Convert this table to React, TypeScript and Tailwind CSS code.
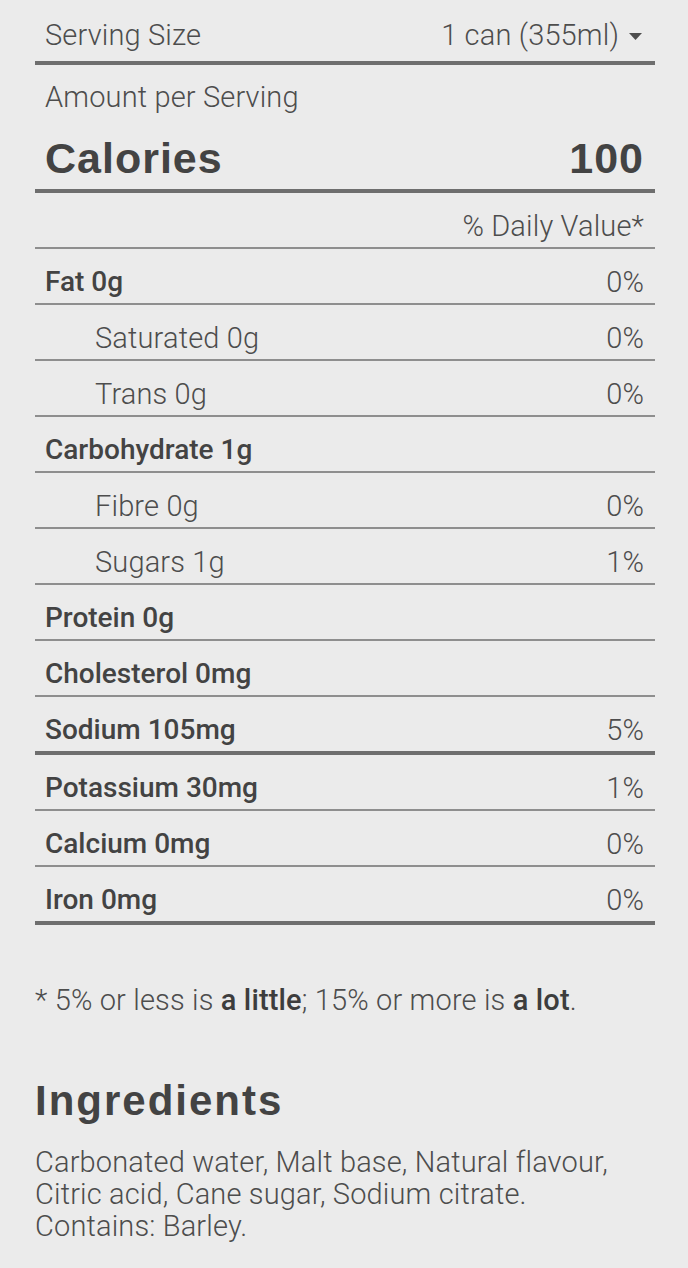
import { FC, ReactNode } from 'react';

type Nutrient = {
  label: string;
  value?: string;
  sub?: boolean;
  thick?: boolean;
  h: string;
};

const nutrients: Nutrient[] = [
  { label: 'Fat 0g', value: '0%', h: 'h-[56px]' },
  { label: 'Saturated 0g', value: '0%', sub: true, h: 'h-[56px]' },
  { label: 'Trans 0g', value: '0%', sub: true, h: 'h-[56px]' },
  { label: 'Carbohydrate 1g', h: 'h-[56px]' },
  { label: 'Fibre 0g', value: '0%', sub: true, h: 'h-[56px]' },
  { label: 'Sugars 1g', value: '1%', sub: true, h: 'h-[56px]' },
  { label: 'Protein 0g', h: 'h-[56px]' },
  { label: 'Cholesterol 0mg', h: 'h-[56px]' },
  { label: 'Sodium 105mg', value: '5%', thick: true, h: 'h-[58px]' },
  { label: 'Potassium 30mg', value: '1%', h: 'h-[56px]' },
  { label: 'Calcium 0mg', value: '0%', h: 'h-[56px]' },
  { label: 'Iron 0mg', value: '0%', thick: true, h: 'h-[58px]' },
];

const body = "font-['Roboto','Liberation_Sans',sans-serif]";
const heading = "font-['Liberation_Sans','Arial',sans-serif]";
const light = 'text-[29px] leading-[28px] font-light tracking-[0.15px] text-[#4d4d4d]';

const Row: FC<{ item: Nutrient }> = ({ item }) => (
  <div
    className={`flex items-end justify-between pb-[7px] pr-[11px] ${item.h} ${
      item.sub ? 'pl-[60px]' : 'pl-[10px]'
    } ${item.thick ? 'border-b-4 border-[#6e6e6e]' : 'border-b-2 border-[#8e8e8e]'}`}
  >
    <span
      className={
        item.sub ? light : 'text-[28px] leading-[28px] font-medium text-[#434343]'
      }
    >
      {item.label}
    </span>
    {item.value && <span className={light}>{item.value}</span>}
  </div>
);

const Strong: FC<{ children: ReactNode }> = ({ children }) => (
  <span className="font-medium text-[#3d3d3d]">{children}</span>
);

export default function App() {
  return (
    <div className={`min-h-screen bg-[#ebebeb] px-[35px] pb-10 ${body}`}>
      <div className="w-[620px]">
        <div className="flex h-[65px] items-end justify-between border-b-4 border-[#6e6e6e] pb-[12px] pl-[10px] pr-[13px]">
          <span className={light}>Serving Size</span>
          <span className={`flex items-center ${light}`}>
            1 can (355ml)
            <svg className="ml-[10px] mt-[2px]" width="13" height="7" viewBox="0 0 13 7">
              <path d="M0 0 H13 L6.5 7 Z" fill="#4d4d4d" />
            </svg>
          </span>
        </div>

        <div className="h-[72px] pl-[10px] pt-[18px]">
          <span className={light}>Amount per Serving</span>
        </div>

        <div
          className={`flex h-[56px] items-end justify-between border-b-4 border-[#6e6e6e] pb-[9px] pl-[10px] pr-[11px] ${heading}`}
        >
          <span className="text-[43px] leading-[43px] font-bold tracking-[1px] text-[#434343]">
            Calories
          </span>
          <span className="text-[43px] leading-[43px] font-bold tracking-[1px] text-[#434343]">
            100
          </span>
        </div>

        <div className="flex h-[56px] items-end justify-end border-b-2 border-[#8e8e8e] pb-[7px] pr-[11px]">
          <span className={light}>% Daily Value*</span>
        </div>

        {nutrients.map((item) => (
          <Row key={item.label} item={item} />
        ))}
      </div>

      <p className={`mt-[61px] ${light}`}>
        * 5% or less is <Strong>a little</Strong>; 15% or more is <Strong>a lot</Strong>.
      </p>

      <h2
        className={`mt-[66px] text-[42px] leading-[42px] font-bold tracking-[2px] text-[#434343] ${heading}`}
      >
        Ingredients
      </h2>

      <p className={`mt-[24px] w-[620px] ${light} leading-[32px]`}>
        Carbonated water, Malt base, Natural flavour,
        <br />
        Citric acid, Cane sugar, Sodium citrate.
        <br />
        Contains: Barley.
      </p>
    </div>
  );
}
